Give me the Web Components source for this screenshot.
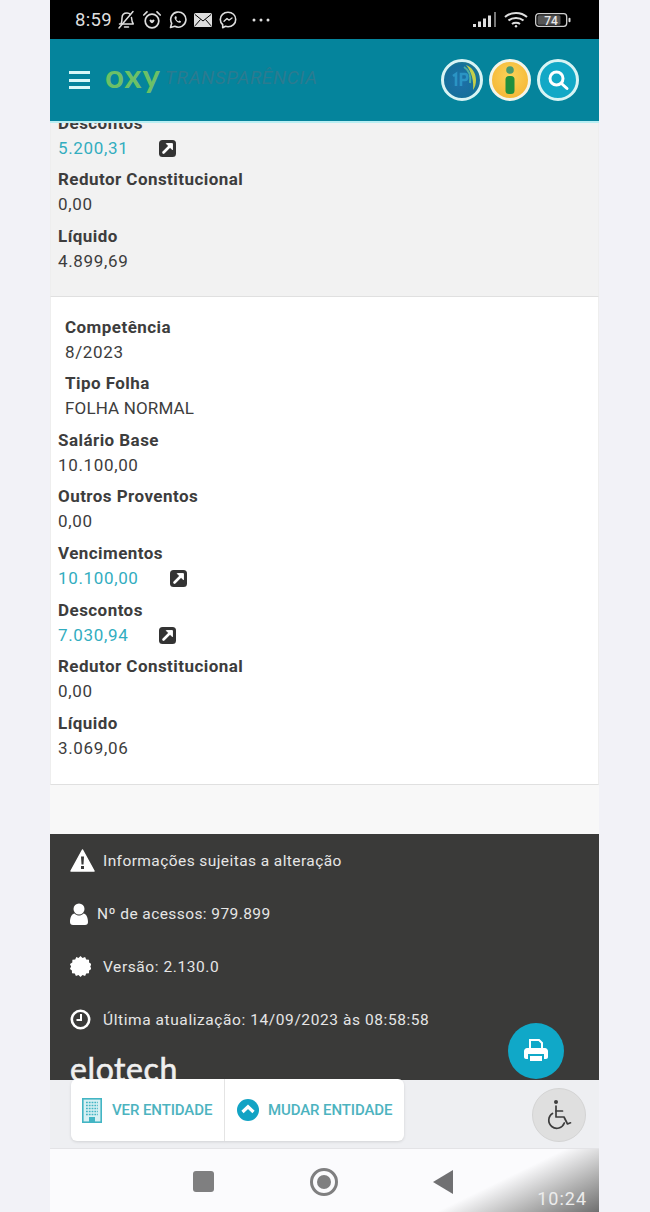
<!DOCTYPE html>
<html lang="pt-BR">
<head>
<meta charset="utf-8">
<title>Oxy Transparência</title>
<style>
  html, body { margin: 0; padding: 0; background: #f2f2f7; }
  body { font-family: Roboto, "Liberation Sans", sans-serif; }
</style>
</head>
<body>
<app-shell>
  <status-bar></status-bar>
  <app-header></app-header>
  <main-content>
    <pay-card tone="grey" clip>
      <pay-field label="Descontos" value="5.200,31" link></pay-field>
      <pay-field label="Redutor Constitucional" value="0,00"></pay-field>
      <pay-field label="Líquido" value="4.899,69"></pay-field>
    </pay-card>
    <pay-card>
      <pay-field label="Competência" value="8/2023" indent></pay-field>
      <pay-field label="Tipo Folha" value="FOLHA NORMAL" indent tight></pay-field>
      <pay-field label="Salário Base" value="10.100,00"></pay-field>
      <pay-field label="Outros Proventos" value="0,00"></pay-field>
      <pay-field label="Vencimentos" value="10.100,00" link></pay-field>
      <pay-field label="Descontos" value="7.030,94" link></pay-field>
      <pay-field label="Redutor Constitucional" value="0,00"></pay-field>
      <pay-field label="Líquido" value="3.069,06"></pay-field>
    </pay-card>
  </main-content>
  <info-footer></info-footer>
  <entity-bar></entity-bar>
  <nav-bar></nav-bar>
  <print-fab></print-fab>
</app-shell>

<script>
(function () {
  'use strict';

  class AppShell extends HTMLElement {
    constructor() {
      super();
      this.attachShadow({ mode: 'open' });
      this.shadowRoot.innerHTML = `
        <style>
          :host {
            display: flex;
            flex-direction: column;
            position: relative;
            width: 549px;
            height: 1212px;
            margin-left: 50px;
            overflow: hidden;
            background: #f8f8f8;
          }
        </style>
        <slot></slot>
      `;
    }
  }

  class StatusBar extends HTMLElement {
    constructor() {
      super();
      this.attachShadow({ mode: 'open' });
      this.shadowRoot.innerHTML = `
        <style>
          :host {
            display: flex;
            align-items: center;
            flex: 0 0 39px;
            padding: 0 28px 0 25px;
            background: #000;
            color: #dedede;
            box-sizing: border-box;
          }
          .time { font-size: 18.500px; letter-spacing: .3px; margin-right: 5px; }
          .left { display: flex; align-items: center; gap: 7px; }
          .dots { margin-left: 8px; }
          .right { display: flex; align-items: center; gap: 7px; margin-left: auto; }
          svg { display: block; }
        </style>
        <span class="time">8:59</span>
        <div class="left">
          <svg width="18" height="20" viewBox="0 0 18 20" fill="none" stroke="#dedede" stroke-width="1.5" stroke-linecap="round" stroke-linejoin="round"><path d="M4 14c1-2 1-4 1-6 0-3 2-5 5-5 1.500 0 2.600.5 3.400 1.400M14.500 7.500c.2 2.500.3 4.500 1.800 6.500H2.500"/><path d="M7.500 17h4M16 1.500 2 18"/></svg>
          <svg width="20" height="20" viewBox="0 0 20 20" fill="none" stroke="#dedede" stroke-width="1.7" stroke-linecap="round"><circle cx="10" cy="11" r="6.800"/><path d="M1.800 5 5 1.800M18.200 5 15 1.800"/><path d="M7.600 10c.8-1 1.800-.5 2.400.4.600-.9 1.600-1.400 2.400-.4.700 1-1.200 2.600-2.400 3.300-1.200-.7-3.100-2.300-2.400-3.300z" fill="#dedede" stroke="none"/></svg>
          <svg width="18" height="18" viewBox="0 0 18 18" fill="none" stroke="#dedede" stroke-width="1.600"><path d="M1.500 16.500 2.700 12.300A7.600 7.600 0 1 1 5.800 15.300z" stroke-linejoin="round"/><path d="M6.300 5.300c-1 .8-1 2 .1 3.600 1.100 1.500 2.500 2.600 3.900 2.800 1 .1 1.700-.5 1.800-1.300l-1.700-.9-.8.800c-1-.4-1.900-1.300-2.400-2.400l.7-.8-.7-1.800z" fill="#dedede" stroke="none"/></svg>
          <svg width="18" height="14" viewBox="0 0 18 14"><rect width="18" height="14" rx="1.500" fill="#dedede"/><path d="M1 1.500 9 8l8-6.500M1 12.800 6.500 6.500M17 12.800 11.500 6.500" fill="none" stroke="#000" stroke-width="1"/></svg>
          <svg width="18" height="18" viewBox="0 0 18 18" fill="none" stroke="#dedede" stroke-width="1.600"><path d="M9 1.300C4.600 1.300 1.300 4.300 1.300 8.400c0 2.200 1 4 2.400 5.300v3l2.700-1.400c.8.200 1.700.4 2.600.4 4.400 0 7.700-3.100 7.700-7.300S13.400 1.300 9 1.300z" stroke-linejoin="round"/><path d="M5 10.300 8 7.500l2 1.700 3-2.200" stroke-width="1.300" stroke-linecap="round" stroke-linejoin="round"/></svg>
          <svg class="dots" width="18" height="4" viewBox="0 0 18 4" fill="#dedede"><circle cx="2" cy="2" r="1.500"/><circle cx="9" cy="2" r="1.500"/><circle cx="16" cy="2" r="1.500"/></svg>
        </div>
        <div class="right">
          <svg width="24" height="16" viewBox="0 0 24 16" fill="#dedede"><rect x="0" y="12" width="3" height="3"/><rect x="5" y="9.500" width="3" height="5.500"/><rect x="10" y="6.500" width="3" height="8.500"/><rect x="15" y="3.500" width="3" height="11.500"/><rect x="21" y="0" width="2" height="15" fill="#777"/></svg>
          <svg width="24" height="17" viewBox="0 0 24 17" fill="none" stroke="#dedede" stroke-width="2"><path d="M1 6c6-5.500 16-5.500 22 0M4.500 9.500c4-3.500 11-3.500 15 0M8 13c2-1.600 6-1.600 8 0"/><circle cx="12" cy="15.300" r="1.200" fill="#dedede" stroke="none"/></svg>
          <svg width="36" height="16" viewBox="0 0 36 16"><rect x=".7" y="1.700" width="31" height="12.600" rx="3" fill="none" stroke="#cfcfcf" stroke-width="1.300"/><rect x="2.500" y="3.300" width="23" height="9.400" rx="1.500" fill="#555"/><rect x="33.500" y="5.700" width="2" height="4.600" rx="1" fill="#dedede"/><text x="16" y="12.500" text-anchor="middle" font-family="Roboto, sans-serif" font-size="12" font-weight="500" fill="#e8e8e8">74</text></svg>
        </div>
      `;
    }
  }

  class AppHeader extends HTMLElement {
    constructor() {
      super();
      this.attachShadow({ mode: 'open' });
      this.shadowRoot.innerHTML = `
        <style>
          :host {
            display: flex;
            align-items: center;
            flex: 0 0 84px;
            padding: 0 20px 0 19px;
            box-sizing: border-box;
            background: #05849c;
            border-bottom: 2px solid #b9eef2;
          }
          .menu { display: flex; flex-direction: column; gap: 4.500px; width: 21px; margin-right: 15px; }
          .menu i { display: block; height: 3px; background: #d9f8f8; }
          .oxy {
            font: 700 33px/40px Lato, sans-serif;
            letter-spacing: 1px;
            color: #6cc067;
            margin-right: 4px;
            position: relative;
            top: -5px;
          }
          .title {
            font: italic 400 19px/24px Roboto, sans-serif;
            letter-spacing: .6px;
            color: #2b7b90;
            position: relative;
            top: -2px;
          }
          .actions { display: flex; gap: 6px; margin-left: auto; }
          .circle {
            width: 42px;
            height: 42px;
            box-sizing: border-box;
            border-radius: 50%;
            border: 3px solid #d8f4f4;
            display: flex;
            align-items: center;
            justify-content: center;
            overflow: hidden;
          }
          .portal { background: radial-gradient(circle at 45% 55%, #1f6fa8 0, #14709b 60%, #2f8a80 100%); }
          .info { background: radial-gradient(circle at 50% 40%, #fbd35a 0, #f4b02c 100%); border-color: #f3f5ea; }
          .search { background: #12a8c6; }
          svg { display: block; }
        </style>
        <div class="menu"><i></i><i></i><i></i></div>
        <span class="oxy">oxy</span>
        <span class="title">TRANSPARÊNCIA</span>
        <div class="actions">
          <div class="circle portal">
            <svg width="36" height="36" viewBox="0 0 36 36" fill="none"><path d="M22 3c6 2 10 8 10 15 0 4-1 7-3 10 1-8-1-18-7-25z" fill="#c4cf4a"/><path d="M20 5c5 3 7 9 6 16" stroke="#4fb0a0" stroke-width="2"/><path d="M9 14l3-2v12M17 24V12h4c3 0 3 6 0 6h-4" stroke="#2a94c4" stroke-width="2.600"/></svg>
          </div>
          <div class="circle info">
            <svg width="14" height="30" viewBox="0 0 14 30" fill="#1f8f3f"><circle cx="7" cy="5" r="3.800" fill="#4a9a70"/><rect x="2.500" y="11" width="9" height="18" rx="3.500"/></svg>
          </div>
          <div class="circle search">
            <svg width="24" height="24" viewBox="0 0 24 24" fill="none" stroke="#fff" stroke-width="3" stroke-linecap="round"><circle cx="10.500" cy="10.500" r="6.500"/><path d="M15.500 15.500 21 20.500"/></svg>
          </div>
        </div>
      `;
    }
  }

  class MainContent extends HTMLElement {
    constructor() {
      super();
      this.attachShadow({ mode: 'open' });
      this.shadowRoot.innerHTML = `
        <style>
          :host {
            display: block;
            flex: 0 0 711px;
            overflow: hidden;
            background: #f8f8f8;
          }
        </style>
        <slot></slot>
      `;
    }
  }

  class PayCard extends HTMLElement {
    constructor() {
      super();
      this.attachShadow({ mode: 'open' });
      this.shadowRoot.innerHTML = `
        <style>
          :host {
            display: block;
            padding: 17.600px 7px 16.600px;
            background: #fff;
            border-bottom: 1px solid #e0e0e0;
            border-left: 1px solid #eee;
            border-right: 1px solid #eee;
            box-sizing: border-box;
          }
          :host([tone="grey"]) { background: #f2f2f2; }
          :host([clip]) { margin-top: -12.400px; padding-top: 0; padding-bottom: 15.600px; }
        </style>
        <slot></slot>
      `;
    }
  }

  class PayField extends HTMLElement {
    constructor() {
      super();
      this.attachShadow({ mode: 'open' });
    }

    connectedCallback() {
      const label = this.getAttribute('label') || '';
      const value = this.getAttribute('value') || '';
      const link = this.hasAttribute('link');
      this.shadowRoot.innerHTML = `
        <style>
          :host {
            display: block;
            height: 56.600px;
            color: #3d3d3d;
          }
          :host([indent]) { padding-left: 7px; }
          .label { font: 700 17px/25px Roboto, sans-serif; letter-spacing: .45px; }
          .value { display: flex; align-items: center; gap: 31px; font: 400 17px/25px Roboto, sans-serif; letter-spacing: .65px; }
          :host([tight]) .value { letter-spacing: .15px; }
          .value.link { color: #32adbf; }
          svg { display: block; }
        </style>
        <div class="label">${label}</div>
        <div class="value ${link ? 'link' : ''}">
          <span>${value}</span>
          ${link ? `<svg width="17" height="17" viewBox="0 0 17 17"><rect width="17" height="17" rx="3.500" fill="#333"/><path d="M4.500 12.500 10.500 6.500" stroke="#fff" stroke-width="2.600" stroke-linecap="round"/><path d="M7.300 3.600h6.100v6.100z" fill="#fff" stroke="#fff" stroke-linejoin="round"/></svg>` : ''}
        </div>
      `;
    }
  }

  class InfoFooter extends HTMLElement {
    constructor() {
      super();
      this.attachShadow({ mode: 'open' });
      this.shadowRoot.innerHTML = `
        <style>
          :host {
            display: block;
            flex: 0 0 246px;
            padding: 0 20px;
            box-sizing: border-box;
            overflow: hidden;
            background: #3a3a39;
            color: #e6e6e6;
          }
          .row {
            display: flex;
            align-items: center;
            height: 53px;
            font: 400 15.500px/20px Roboto, sans-serif;
            letter-spacing: .42px;
          }
          .row.wide { letter-spacing: .58px; }
          .ico { flex: 0 0 33px; display: flex; align-items: center; }
          .ico.tight { flex-basis: 27px; }
          .logo {
            margin-top: 5px;
            font: 400 32px/36px Lato, sans-serif;
            letter-spacing: .6px;
            -webkit-text-stroke: .6px #f0f0f0;
            color: #f0f0f0;
          }
          svg { display: block; }
        </style>
        <div class="row">
          <span class="ico"><svg width="25" height="23" viewBox="0 0 25 23"><path d="M12.500 1 24 22H1z" fill="#fff" stroke="#fff" stroke-width="1.500" stroke-linejoin="round"/><path d="M11 7.500h3l-.5 8h-2zM11 17h3v3h-3z" fill="#3a3a39"/></svg></span>
          <span>Informações sujeitas a alteração</span>
        </div>
        <div class="row">
          <span class="ico tight"><svg width="18" height="22" viewBox="0 0 18 22" fill="#fff"><circle cx="9" cy="6" r="5.500"/><path d="M0 19c0-5 2-8 4.500-8.500C6 12 7.500 12.500 9 12.500s3-.5 4.500-2C16 11 18 14 18 19c0 2-1 3-3 3H3c-2 0-3-1-3-3z"/></svg></span>
          <span>Nº de acessos: 979.899</span>
        </div>
        <div class="row wide">
          <span class="ico"><svg width="21" height="21" viewBox="0 0 21 21" fill="#fff"><path d="M10.500 0l2 2 2.600-1.100 1.100 2.600 2.800.2.100 2.800 2.400 1.500-1.200 2.500 1.200 2.500-2.400 1.500-.1 2.800-2.800.2-1.100 2.600-2.600-1.100-2 2-2-2-2.600 1.100-1.100-2.600-2.800-.2-.1-2.800L-.1 13l1.200-2.500L-.1 8l2.400-1.500.1-2.800 2.800-.2L6.300.9 8.500 2z"/></svg></span>
          <span>Versão: 2.130.0</span>
        </div>
        <div class="row wide">
          <span class="ico"><svg width="21" height="21" viewBox="0 0 21 21" fill="none" stroke="#fff"><circle cx="10.500" cy="10.500" r="8.700" stroke-width="2.600"/><path d="M11 5v6H6.500" stroke-width="2"/></svg></span>
          <span>Última atualização: 14/09/2023 às 08:58:58</span>
        </div>
        <div class="logo">elotech</div>
      `;
    }
  }

  class EntityBar extends HTMLElement {
    constructor() {
      super();
      this.attachShadow({ mode: 'open' });
      this.shadowRoot.innerHTML = `
        <style>
          :host {
            display: flex;
            align-items: flex-start;
            flex: 0 0 69px;
            padding: 0 13px 0 21px;
            box-sizing: border-box;
            background: #eeeff2;
            border-bottom: 1px solid #e3e3e6;
          }
          .group {
            display: flex;
            width: 333px;
            height: 62px;
            margin-top: -1px;
            background: #fff;
            border-radius: 6px;
            box-shadow: 0 1px 3px rgba(0, 0, 0, .12);
            font: 500 15px/20px Roboto, sans-serif;
            letter-spacing: -.1px;
            color: #4db3bf;
            position: relative;
          }
          .btn { display: flex; align-items: center; gap: 10px; padding-left: 11px; }
          .btn + .btn { border-left: 1px solid #e4e4e4; padding-left: 12px; gap: 9px; flex: 1; }
          .first { width: 142px; }
          .access {
            margin-left: auto;
            margin-top: 8px;
            width: 54px;
            height: 54px;
            box-sizing: border-box;
            border-radius: 50%;
            background: #dfdfdf;
            border: 1px solid #d4d4d4;
            display: flex;
            align-items: center;
            justify-content: center;
          }
          svg { display: block; }
        </style>
        <div class="group">
          <div class="btn first">
            <svg width="20" height="25" viewBox="0 0 20 25"><rect x=".8" y=".8" width="18.400" height="23.400" fill="#d8f0f3" stroke="#43b5c4" stroke-width="1.600"/><path d="M4 4.500h12M4 7.500h12M4 10.500h12M4 13.500h12M4 16.500h12" stroke="#43b5c4" stroke-width="1.700" stroke-dasharray="1.800 1"/><rect x="7" y="19" width="6" height="5" fill="#43b5c4"/></svg>
            <span>VER ENTIDADE</span>
          </div>
          <div class="btn">
            <svg width="22" height="22" viewBox="0 0 22 22"><circle cx="11" cy="11" r="11" fill="#12a3c4"/><path d="M5.500 13 11 7.800 16.500 13" fill="none" stroke="#fff" stroke-width="3.200"/></svg>
            <span>MUDAR ENTIDADE</span>
          </div>
        </div>
        <div class="access">
          <svg width="26" height="32" viewBox="0 0 26 32" fill="none" stroke="#3d3d3d" stroke-width="1.700" stroke-linecap="round" stroke-linejoin="round"><circle cx="10" cy="3" r="2" fill="#3d3d3d" stroke="none"/><path d="M10 7v11h8l3.500 7 3-1.200"/><path d="M10 12h6.500"/><path d="M6.500 14.500a8 8 0 1 0 11.800 9.500"/></svg>
        </div>
      `;
    }
  }

  class NavBar extends HTMLElement {
    constructor() {
      super();
      this.attachShadow({ mode: 'open' });
      this.shadowRoot.innerHTML = `
        <style>
          :host {
            display: flex;
            align-items: center;
            flex: 1;
            position: relative;
            padding: 2px 0 0 143px;
            box-sizing: border-box;
            background: linear-gradient(154deg, #fbfbfd 0, #fbfbfd 76%, #b4b4b4 88%, #6f6f6f 100%);
          }
          .square { width: 21px; height: 21px; border-radius: 3px; background: #7f7f80; margin-right: 96px; }
          .home {
            width: 28px;
            height: 28px;
            box-sizing: border-box;
            border-radius: 50%;
            border: 3px solid #7f7f80;
            padding: 4px;
            margin-right: 95px;
          }
          .home i { display: block; width: 14px; height: 14px; border-radius: 50%; background: #7f7f80; }
          .back {
            width: 0;
            height: 0;
            border-style: solid;
            border-width: 12px 20px 12px 0;
            border-color: transparent #707072 transparent transparent;
          }
          .clock {
            position: absolute;
            right: 12px;
            bottom: 2px;
            font: 400 18px/22px Roboto, sans-serif;
            letter-spacing: 1px;
            color: #ececec;
          }
        </style>
        <div class="square"></div>
        <div class="home"><i></i></div>
        <div class="back"></div>
        <span class="clock">10:24</span>
      `;
    }
  }

  class PrintFab extends HTMLElement {
    constructor() {
      super();
      this.attachShadow({ mode: 'open' });
      this.shadowRoot.innerHTML = `
        <style>
          :host {
            position: absolute;
            left: 458px;
            top: 1023px;
            width: 56px;
            height: 56px;
            border-radius: 50%;
            background: #10a8c8;
            display: flex;
            align-items: center;
            justify-content: center;
          }
          svg { display: block; }
        </style>
        <svg width="24" height="24" viewBox="0 0 24 24"><path d="M6 1h9l3 3v6H6z" fill="none" stroke="#fff" stroke-width="2"/><path d="M3 9h18c1.500 0 3 1.500 3 3v6c0 1-1 2-2 2h-2v-5H4v5H2c-1 0-2-1-2-2v-6c0-1.500 1.500-3 3-3z" fill="#fff"/><rect x="6" y="17" width="12" height="5" fill="#fff"/></svg>
      `;
    }
  }

  customElements.define('app-shell', AppShell);
  customElements.define('status-bar', StatusBar);
  customElements.define('app-header', AppHeader);
  customElements.define('main-content', MainContent);
  customElements.define('pay-card', PayCard);
  customElements.define('pay-field', PayField);
  customElements.define('info-footer', InfoFooter);
  customElements.define('entity-bar', EntityBar);
  customElements.define('nav-bar', NavBar);
  customElements.define('print-fab', PrintFab);
})();
</script>
</body>
</html>
